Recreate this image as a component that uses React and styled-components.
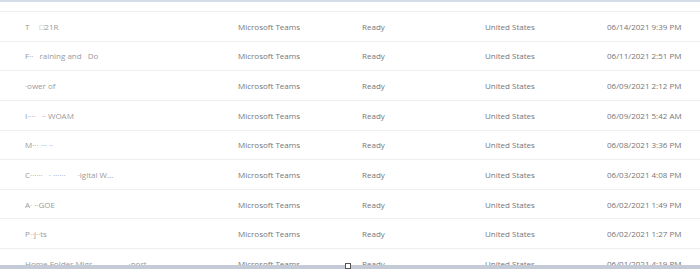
import React from "react";
import styled, { createGlobalStyle } from "styled-components";

const Global = createGlobalStyle`
  html, body { margin: 0; padding: 0; background: #ffffff; }
  body { font-family: "Open Sans", "Noto Sans", sans-serif; overflow: hidden; }
`;

const Page = styled.div`
  width: 700px;
  height: 269px;
  display: flex;
  flex-direction: column;
  overflow: hidden;
  background: #fff;
`;

const TopEdge = styled.div`
  height: 2px;
  flex: none;
  background: #d3dce8;
`;

const HeaderGap = styled.div`
  height: 9px;
  flex: none;
  border-bottom: 1px solid #eeeeee;
`;

const List = styled.div`
  flex: 1;
  display: flex;
  flex-direction: column;
  overflow: hidden;
`;

const Row = styled.div`
  flex: none;
  box-sizing: border-box;
  height: 29.625px;
  display: grid;
  grid-template-columns: 238px 124px 123px 122px 1fr;
  align-items: center;
  border-bottom: 1px solid #eeeeee;
  font-size: 8px;
  color: #767676;
  white-space: nowrap;
`;

const Cell = styled.div`
  overflow: hidden;
  padding-left: ${(p) => (p.$first ? "25px" : "0")};
  color: ${(p) => (p.$faded ? "#9a9a9a" : "inherit")};
`;

const BottomBar = styled.div`
  height: 4px;
  flex: none;
  background: #c4cbd6;
  position: relative;
`;

const Grip = styled.span`
  position: absolute;
  left: 345px;
  top: -2px;
  width: 4px;
  height: 4px;
  border: 1px solid #555;
  background: #fff;
`;

const rows = [
  ["T\u2002 \u2002\u25A121R", "06/14/2021 9:39 PM"],
  ["F\u00B7\u00B7  \u2002raining and \u2002Do", "06/11/2021 2:51 PM"],
  ["\u00B7ower of", "06/09/2021 2:12 PM"],
  ["I\u00B7\u00B7\u00B7\u00B7 \u2002\u00B7\u00B7 WOAM", "06/09/2021 5:42 AM"],
  ["M\u00B7\u00B7\u00B7 \u00B7\u00B7\u00B7 \u00B7\u00B7", "06/08/2021 3:36 PM"],
  ["C\u00B7\u00B7\u00B7\u00B7\u00B7\u00B7 \u2002\u00B7 \u00B7\u00B7\u00B7\u00B7\u00B7\u00B7 \u2002 \u2002\u00B7igital W...", "06/03/2021 4:08 PM"],
  ["A\u00B7 \u00B7\u00B7GOE", "06/02/2021 1:49 PM"],
  ["P\u00B7\u00B7j\u00B7\u00B7ts", "06/02/2021 1:27 PM"],
  ["Home Folder Migr...\u2003\u2003\u2003\u2002 \u00B7port", "06/01/2021 4:19 PM"],
];

export default function App() {
  return (
    <Page>
      <Global />
      <TopEdge />
      <HeaderGap />
      <List>
        {rows.map(([name, date], i) => (
          <Row key={i}>
            <Cell $first $faded>{name}</Cell>
            <Cell>Microsoft Teams</Cell>
            <Cell>Ready</Cell>
            <Cell>United States</Cell>
            <Cell>{date}</Cell>
          </Row>
        ))}
      </List>
      <BottomBar>
        <Grip />
      </BottomBar>
    </Page>
  );
}
